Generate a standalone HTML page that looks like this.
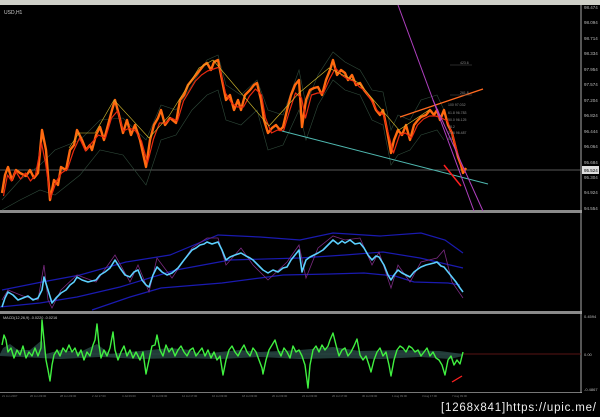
<!DOCTYPE html>
<html><head><meta charset="utf-8"><style>
html,body{margin:0;padding:0;background:#000;width:600px;height:417px;overflow:hidden}
svg{display:block}
text{font-family:"Liberation Sans",sans-serif}
</style></head><body>
<svg width="600" height="417" viewBox="0 0 600 417" xmlns="http://www.w3.org/2000/svg">
<rect width="600" height="417" fill="#000"/>
<rect x="0" y="0" width="600" height="5" fill="#cfd0c8"/>
<rect x="0" y="210" width="582" height="3" fill="#8a8a8a"/>
<rect x="0" y="311" width="582" height="3" fill="#8a8a8a"/>
<rect x="0" y="392" width="582" height="1" fill="#777"/>
<line x1="581" y1="5" x2="581" y2="393" stroke="#aaa" stroke-width="1"/>
<text x="4" y="14" fill="#ccc" font-size="5">USD,H1</text>
<line x1="0" y1="170" x2="581" y2="170" stroke="#777" stroke-width="0.7"/>
<polyline fill="none" stroke="#2f4a3a" stroke-width="0.6" points="2,200 20,180 40,165 55,150 80,140 100,120 123,118 146,140 161,105 176,110 192,85 207,60 218,55 226,85 241,95 257,80 268,110 283,115 299,70 306,105 318,75 333,52 345,62 360,70 372,90 383,92 391,130 398,115 410,120 421,100 437,95 444,110"/>
<polyline fill="none" stroke="#2f4a3a" stroke-width="0.6" points="2,210 20,200 40,190 55,195 80,175 100,150 123,155 146,185 161,140 176,135 192,110 207,95 218,90 226,120 241,125 257,110 268,150 283,145 299,110 306,140 318,105 333,80 345,90 360,95 372,120 383,125 391,165 398,155 410,150 421,135 437,130 444,140"/>
<g id="price">
<polyline fill="none" stroke="#ff6a10" stroke-width="2.4" stroke-linejoin="round" points="2,193 5,175 8,167 12,180 16,170 20,173 26,176 30,170 34,178 38,173 42,130 46,150 50,200 54,180 58,185 61,167 66,170 70,150 74,145 77,130 82,140 86,150 90,145 92,150 96,135 100,127 104,140 108,125 112,110 115,100 119,115 123,133 127,120 131,135 135,125 140,140 146,167 150,140 154,125 158,118 161,110 165,125 170,118 176,123 180,100 184,95 188,85 192,80 196,75 200,70 204,65 207,63 211,70 214,62 218,60 222,80 226,100 230,95 234,110 238,100 241,110 245,95 250,90 254,85 257,83 261,100 264,120 268,133 272,128 276,125 280,130 283,127 287,110 291,95 295,85 299,80 302,127 306,100 310,90 314,88 318,87 322,95 326,80 330,70 333,60 337,75 341,70 345,73 348,80 352,75 356,85 360,83 364,90 368,95 372,100 376,110 380,115 383,110 387,130 391,153 394,140 398,130 402,135 406,125 410,140 414,125 418,120 421,117 426,115 430,110 434,115 437,110 440,120 444,110 448,125 452,133 455,145 458,157 461,165 463,173 466,168"/>
<polyline fill="none" stroke="#e82a10" stroke-width="1.2" stroke-linejoin="round" transform="translate(1.5,3)" points="2,193 6,172 10,178 14,168 19,176 24,170 29,178 34,172 40,140 44,160 49,195 55,178 60,170 66,166 72,148 78,135 84,148 90,140 97,132 104,135 110,115 116,108 122,128 128,125 134,128 140,138 146,160 152,136 158,120 164,120 170,115 176,118 182,98 188,88 194,78 200,72 206,68 212,66 218,64 224,90 230,100 236,104 242,104 248,93 254,86 260,92 264,115 270,130 276,127 282,128 288,108 294,90 300,95 304,115 310,92 316,90 322,90 328,76 334,65 340,72 346,76 352,78 358,84 364,88 370,98 376,108 382,112 388,135 392,150 398,132 404,130 410,135 416,122 422,116 428,113 434,113 440,115 446,118 452,135 456,150 460,162 464,170"/>
<polyline fill="none" stroke="#d8c030" stroke-width="0.6" transform="translate(-1,-2)" points="70,150 80,135 96,135 115,102 150,140 170,118 200,70 214,62 270,128 300,95 330,70 360,85 400,132 430,112"/>
</g>
<line x1="282" y1="131" x2="488" y2="184" stroke="#4fb8b0" stroke-width="1"/>
<line x1="400" y1="117" x2="483" y2="89" stroke="#ff6a20" stroke-width="1.3"/>
<line x1="398" y1="5" x2="474" y2="211" stroke="#b040c0" stroke-width="1"/>
<line x1="433" y1="100" x2="483" y2="211" stroke="#b040c0" stroke-width="1"/>
<line x1="444" y1="165" x2="461" y2="186" stroke="#ff2020" stroke-width="1.5"/>
<g fill="#888" font-size="3.5">
<text x="460" y="64">423.6</text><line x1="450" y1="65" x2="472" y2="65" stroke="#555" stroke-width="0.5"/>
<text x="460" y="94">261.8</text><line x1="450" y1="95" x2="472" y2="95" stroke="#555" stroke-width="0.5"/>
<text x="448" y="106">100 97.032</text><text x="448" y="114">61.8 96.783</text><text x="448" y="121">50.0 96.125</text><text x="448" y="128">38.2</text><text x="448" y="134">23.6 96.487</text><text x="448" y="140">0.0</text>
</g>
<g fill="#bbb" font-size="4.5">
<text x="584" y="9">98.474</text><text x="584" y="24">98.094</text><text x="584" y="40">98.714</text><text x="584" y="55">98.334</text><text x="584" y="71">97.954</text><text x="584" y="86">97.574</text><text x="584" y="102">97.204</text><text x="584" y="117">96.824</text><text x="584" y="133">96.444</text><text x="584" y="148">96.064</text><text x="584" y="164">95.684</text><text x="584" y="179">95.304</text><text x="584" y="194">94.924</text><text x="584" y="210">94.554</text>
</g>
<rect x="582" y="166" width="17" height="8" fill="#ddd"/>
<text x="584" y="172" fill="#000" font-size="4.5">95.524</text>
<polyline fill="none" stroke="#1a1ab0" stroke-width="1.2" points="2,290 42,282 80,275 126,262 170,255 218,235 260,237 300,240 333,233 380,236 421,233 445,240 463,253"/>
<polyline fill="none" stroke="#1a1ab0" stroke-width="1.2" points="0,307 40,303 77,297 120,287 176,270 230,260 300,258 345,255 383,252 420,258 463,268"/>
<polyline fill="none" stroke="#1a1ab0" stroke-width="1.2" points="92,310 130,297 161,288 222,283 260,278 283,275 330,274 364,273 395,276 414,282 448,283 460,285"/>
<polyline fill="none" stroke="#7a2a80" stroke-width="0.8" points="2,300 8,290 23,296 38,300 44,265 48,300 52,308 61,290 77,275 96,282 115,255 130,282 138,265 149,292 157,258 172,278 192,248 207,238 218,238 226,265 241,248 253,265 268,280 287,262 299,245 306,278 318,248 333,236 345,240 360,238 372,265 379,252 391,288 398,265 410,282 421,262 437,258 444,250 452,282 463,298"/>
<polyline fill="none" stroke="#5cd0ff" stroke-width="1.6" stroke-linejoin="round" points="2,307 5,298 8,292 13,295 18,300 23,298 28,296 33,300 38,298 42,290 44,277 48,290 52,303 56,298 61,293 66,290 70,285 74,282 77,277 82,280 88,282 96,280 100,275 105,272 110,268 115,260 120,268 125,275 130,277 134,272 138,270 142,280 146,285 149,287 153,275 157,267 162,272 167,275 172,273 178,268 184,260 188,255 192,250 196,248 200,245 204,244 207,242 212,244 218,242 222,250 226,260 230,257 235,255 241,253 246,256 250,258 253,260 258,265 263,270 268,273 273,270 278,272 283,268 287,267 291,260 295,255 299,250 302,272 306,260 310,257 314,255 318,253 323,250 328,245 333,240 338,244 342,241 345,243 350,240 355,244 360,243 364,248 368,255 372,260 376,256 379,257 384,265 388,275 391,280 394,275 398,270 402,273 406,275 410,277 414,272 418,269 421,267 426,265 430,264 434,263 437,262 441,266 444,267 448,272 452,277 456,282 460,288 463,292"/>
<text x="3" y="319" fill="#ccc" font-size="3.8">MACD(12,26,9) -0.0220 -0.0216</text>
<line x1="0" y1="354" x2="581" y2="354" stroke="#2a3a38" stroke-width="0.6"/>
<line x1="463" y1="354" x2="581" y2="354" stroke="#701010" stroke-width="0.7"/>
<polygon fill="#2f5450" opacity="0.7" points="0,354 3,348 10,344 18,350 30,350 42,340 46,354 60,350 80,352 97,344 110,354 150,350 170,348 190,350 200,354 240,350 260,352 300,350 333,347 360,351 400,350 440,351 463,354 463,356 450,359 420,357 380,359 340,358 300,359 260,357 220,359 180,358 140,359 100,357 60,359 20,357 0,356"/>
<polyline fill="none" stroke="#40f040" stroke-width="1.4" stroke-linejoin="round" points="2,345 4,335 6,340 8,352 11,348 14,358 17,350 20,355 23,346 26,358 29,352 32,356 35,348 38,356 41,348 42,320 44,340 46,360 48,370 50,381 52,365 54,355 57,350 60,356 63,348 66,352 69,345 72,352 75,348 78,356 81,350 84,360 87,352 90,356 93,345 95,340 97,324 99,345 101,358 104,350 107,356 110,348 113,332 115,350 118,360 121,352 124,346 127,356 130,350 133,358 136,352 140,360 143,352 146,374 149,360 152,346 155,345 157,335 160,350 163,356 166,345 169,352 172,348 175,356 178,350 181,346 184,352 187,356 190,350 193,348 196,356 199,352 202,348 205,356 208,350 211,358 214,352 217,360 220,356 223,375 226,360 229,350 232,346 235,352 238,356 241,350 244,345 247,352 250,356 253,348 256,352 259,360 262,368 263,374 266,360 269,350 272,345 275,340 278,350 281,356 284,348 287,352 290,358 293,346 296,352 299,350 302,356 305,365 308,388 310,365 313,350 316,346 319,352 322,345 325,350 328,346 330,340 333,333 336,345 339,356 342,350 345,348 348,356 351,352 354,346 357,339 360,355 363,360 366,356 369,365 371,372 374,360 377,352 380,348 383,356 386,352 389,365 391,376 394,360 397,350 400,346 403,348 406,352 409,346 412,348 415,352 418,350 421,356 424,352 427,348 430,356 433,352 436,358 439,360 442,365 445,375 448,360 451,356 454,365 457,360 460,364 463,352"/>
<line x1="452" y1="382" x2="462" y2="376" stroke="#ff2020" stroke-width="1.3"/>
<g fill="#bbb" font-size="4">
<text x="584" y="318">0.4594</text><text x="584" y="356">0.00</text><text x="584" y="391">-0.4867</text>
</g>
<g fill="#777" font-size="2.8">
<text x="2" y="397">21 Jun 2007</text><text x="30" y="397">26 Jun 09:00</text><text x="60" y="397">28 Jun 09:00</text><text x="92" y="397">2 Jul 17:00</text><text x="122" y="397">4 Jul 09:00</text><text x="152" y="397">10 Jul 09:00</text><text x="182" y="397">12 Jul 17:00</text><text x="212" y="397">16 Jul 09:00</text><text x="242" y="397">18 Jul 09:00</text><text x="272" y="397">20 Jul 09:00</text><text x="302" y="397">24 Jul 09:00</text><text x="332" y="397">26 Jul 17:00</text><text x="362" y="397">30 Jul 09:00</text><text x="392" y="397">1 Aug 09:00</text><text x="422" y="397">3 Aug 17:00</text><text x="452" y="397">7 Aug 09:00</text>
</g>
<text x="441" y="411" fill="#eee" font-size="11.5" font-family="DejaVu Sans, sans-serif" textLength="155">[1268x841]https://upic.me/</text>
</svg>
</body></html>
